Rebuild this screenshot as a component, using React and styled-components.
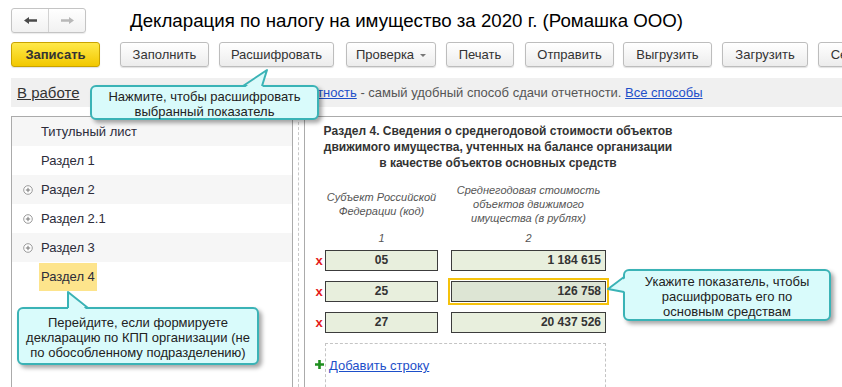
import styled, { createGlobalStyle } from "styled-components";

const GlobalStyle = createGlobalStyle`
  body {
    margin: 0;
    background: #fff;
    font-family: "Liberation Sans", Arial, sans-serif;
  }
`;

const actions = [
  { label: "Заполнить", width: 89, gap: 20 },
  { label: "Расшифровать", width: 115 },
  { label: "Проверка", width: 90, menu: true, gap: 12 },
  { label: "Печать", width: 68 },
  { label: "Отправить", width: 89, gap: 11 },
  { label: "Выгрузить", width: 89, gap: 9 },
  { label: "Загрузить", width: 86 },
  { label: "Сервис", width: 70 },
];

const sections = [
  { title: "Титульный лист" },
  { title: "Раздел 1" },
  { title: "Раздел 2", expandable: true },
  { title: "Раздел 2.1", expandable: true },
  { title: "Раздел 3", expandable: true },
  { title: "Раздел 4", selected: true },
];

const rows = [
  { code: "05", value: "1 184 615" },
  { code: "25", value: "126 758", active: true },
  { code: "27", value: "20 437 526" },
];

function ArrowIcon({ dir, color }) {
  const d = dir === "left"
    ? "M0 3.5 L5 0 L5 2.2 L13 2.2 L13 4.8 L5 4.8 L5 7 Z"
    : "M13 3.5 L8 0 L8 2.2 L0 2.2 L0 4.8 L8 4.8 L8 7 Z";
  return (
    <svg width="13" height="7" viewBox="0 0 13 7">
      <path d={d} fill={color} />
    </svg>
  );
}

function PlusCircle() {
  return (
    <svg width="10" height="10" viewBox="0 0 10 10">
      <circle cx="5" cy="5" r="4.3" fill="#fff" stroke="#9a9a9a" strokeWidth="1" />
      <path d="M2.8 5 H7.2 M5 2.8 V7.2" stroke="#777" strokeWidth="1" />
    </svg>
  );
}

function AddIcon() {
  return (
    <svg width="9" height="9" viewBox="0 0 9 9">
      <path d="M0 4.5 H9 M4.5 0 V9" stroke="#1f8f1f" strokeWidth="2.6" />
    </svg>
  );
}

function Callout({ left, top, width, height, tail, children }) {
  return (
    <Bubble style={{ left, top, width, height }}>
      <Tail>
        <polygon points={tail.fill} fill="#d9fbfb" />
        <polyline points={tail.line} fill="none" stroke="#3ab3b6" strokeWidth="2" strokeLinejoin="round" />
      </Tail>
      {children}
    </Bubble>
  );
}

function App() {
  return (
    <>
      <GlobalStyle />
      <Page>
        <Header>
          <NavGroup>
            <NavButton><ArrowIcon dir="left" color="#4a4a4a" /></NavButton>
            <NavButton><ArrowIcon dir="right" color="#b8b8b8" /></NavButton>
          </NavGroup>
          <Title>Декларация по налогу на имущество за 2020 г. (Ромашка ООО)</Title>
        </Header>

        <Toolbar>
          <Button $primary $w={89}>Записать</Button>
          {actions.map((a) => (
            <Button key={a.label} $w={a.width} $gap={a.gap}>
              {a.label}
              {a.menu && <Caret />}
            </Button>
          ))}
        </Toolbar>

        <InfoBar>
          <StatusLink>В работе</StatusLink>
          <InfoText>
            Отправка отчетов через <Link>1С-Отчетность</Link> - самый удобный способ сдачи отчетности.{" "}
            <Link>Все способы</Link>
          </InfoText>
        </InfoBar>

        <Main>
          <Sidebar>
            {sections.map((s, i) => (
              <NavRow key={s.title} $striped={i % 2 === 0 && !s.selected}>
                <IconSlot>{s.expandable && <PlusCircle />}</IconSlot>
                <RowLabel $selected={s.selected}>{s.title}</RowLabel>
              </NavRow>
            ))}
          </Sidebar>
          <Splitter />
          <Content>
            <Heading>
              Раздел 4. Сведения о среднегодовой стоимости объектов<br />
              движимого имущества, учтенных на балансе организации<br />
              в качестве объектов основных средств
            </Heading>

            <FormRow $mt={12} $center>
              <Mark />
              <HeadCell $w={113}>Субъект Российской<br />Федерации (код)</HeadCell>
              <HeadCell $w={155} $ml={13}>Среднегодовая стоимость<br />объектов движимого<br />имущества (в рублях)</HeadCell>
            </FormRow>

            <FormRow $mt={6}>
              <Mark />
              <HeadCell $w={113}>1</HeadCell>
              <HeadCell $w={155} $ml={13}>2</HeadCell>
            </FormRow>

            {rows.map((r, i) => (
              <FormRow key={r.code} $mt={i === 0 ? 5 : 10} $center>
                <Mark $color="#e41b1b">x</Mark>
                <Cell $w={113} $align="center">{r.code}</Cell>
                <Cell $w={155} $ml={13} $align="right" $active={r.active}>{r.value}</Cell>
              </FormRow>
            ))}

            <FormRow $mt={10}>
              <Mark $top={17}><AddIcon /></Mark>
              <AddArea>
                <Link>Добавить строку</Link>
              </AddArea>
            </FormRow>
          </Content>
        </Main>

        <Callout left={90} top={85} width={229} height={35}
          tail={{ fill: "153,4 177,-15 172,4", line: "153,1 177,-15 172,1" }}>
          Нажмите, чтобы расшифровать<br />выбранный показатель
        </Callout>

        <Callout left={17} top={307} width={242} height={58}
          tail={{ fill: "51,4 51,-15 71,4", line: "51,1 51,-15 71,1" }}>
          Перейдите, если формируете<br />декларацию по КПП организации (не<br />по обособленному подразделению)
        </Callout>

        <Callout left={623} top={269} width={208} height={52}
          tail={{ fill: "4,8 -15,20 4,23", line: "1,8 -15,20 1,23" }}>
          Укажите показатель, чтобы<br />расшифровать его по<br />основным средствам
        </Callout>
      </Page>
    </>
  );
}

const Page = styled.div`
  position: relative;
  width: 842px;
  height: 387px;
  overflow: hidden;
  padding-left: 11px;
  box-sizing: border-box;
  color: #333;
`;

const Header = styled.div`
  display: flex;
  align-items: center;
  height: 25px;
  margin-top: 8px;
`;

const NavGroup = styled.div`
  display: flex;
  height: 25px;
  border: 1px solid #c4c4c4;
  border-radius: 3px;
  box-sizing: border-box;
  background: linear-gradient(#ffffff, #f1f1f1);
  box-shadow: 0 1px 1px rgba(0, 0, 0, 0.08);
`;

const NavButton = styled.div`
  width: 36px;
  display: flex;
  align-items: center;
  justify-content: center;
  & + & {
    border-left: 1px solid #d2d2d2;
  }
`;

const Title = styled.h1`
  margin: 0 0 0 44px;
  font-size: 18.7px;
  font-weight: 400;
  color: #000;
  white-space: nowrap;
`;

const Toolbar = styled.div`
  display: flex;
  gap: 10px;
  margin-top: 9px;
  height: 25px;
`;

const Button = styled.div`
  flex-shrink: 0;
  display: flex;
  align-items: center;
  justify-content: center;
  gap: 6px;
  width: ${(p) => p.$w}px;
  height: 25px;
  box-sizing: border-box;
  margin-left: ${(p) => (p.$gap ? p.$gap - 10 : 0)}px;
  border: 1px solid ${(p) => (p.$primary ? "#c9a300" : "#bdbdbd")};
  border-radius: 3px;
  background: ${(p) =>
    p.$primary
      ? "linear-gradient(#ffe94a, #f2c800)"
      : "linear-gradient(#ffffff, #ececec)"};
  box-shadow: 0 1px 1px rgba(0, 0, 0, 0.12);
  font-size: 13px;
  font-weight: ${(p) => (p.$primary ? 700 : 400)};
  color: #333;
  white-space: nowrap;
`;

const Caret = styled.span`
  width: 0;
  height: 0;
  border-left: 3px solid transparent;
  border-right: 3px solid transparent;
  border-top: 3px solid #777;
  margin-top: 1px;
`;

const InfoBar = styled.div`
  display: flex;
  align-items: center;
  height: 29px;
  margin-top: 11px;
  padding-left: 6px;
  background: #f0f0f0;
  font-size: 13px;
  white-space: nowrap;
`;

const StatusLink = styled.span`
  font-size: 15px;
  color: #333;
  text-decoration: underline;
`;

const InfoText = styled.span`
  margin-left: 38px;
  color: #555;
`;

const Link = styled.span`
  color: #1d4fc9;
  text-decoration: underline;
`;

const Main = styled.div`
  display: flex;
  margin-top: 9px;
  height: 280px;
  border-top: 1px solid #ababab;
`;

const Sidebar = styled.div`
  width: 282px;
  box-sizing: border-box;
  border-left: 1px solid #ababab;
  border-right: 1px solid #ababab;
`;

const NavRow = styled.div`
  display: flex;
  align-items: center;
  height: 29px;
  padding-left: 11px;
  background: ${(p) => (p.$striped ? "#f6f6f6" : "#fff")};
  font-size: 13px;
  color: #2c2c3a;
`;

const IconSlot = styled.div`
  width: 18px;
  display: flex;
  align-items: center;
`;

const RowLabel = styled.span`
  line-height: 28px;
  padding: 0 2px;
  margin-left: -2px;
  background: ${(p) => (p.$selected ? "#fde48c" : "transparent")};
`;

const Splitter = styled.div`
  width: 5px;
  margin-right: 5px;
  border-right: 1px dashed #c8c8c8;
`;

const Content = styled.div`
  flex: 1;
  border-left: 1px solid #ababab;
  padding: 6px 0 0 8px;
`;

const Heading = styled.div`
  width: 370px;
  text-align: center;
  font-size: 12px;
  font-weight: 700;
  line-height: 16px;
  color: #333;
  white-space: nowrap;
`;

const FormRow = styled.div`
  display: flex;
  align-items: ${(p) => (p.$center ? "center" : "flex-start")};
  margin-top: ${(p) => p.$mt || 0}px;
`;

const Mark = styled.div`
  width: 12px;
  flex-shrink: 0;
  display: flex;
  justify-content: center;
  margin-top: ${(p) => p.$top || 0}px;
  font-size: 13px;
  font-weight: 700;
  line-height: 14px;
  color: ${(p) => p.$color || "transparent"};
`;

const HeadCell = styled.div`
  width: ${(p) => p.$w}px;
  margin-left: ${(p) => p.$ml || 0}px;
  text-align: center;
  font-size: 11px;
  font-style: italic;
  line-height: 14px;
  color: #555;
`;

const Cell = styled.div`
  width: ${(p) => p.$w}px;
  height: 21px;
  box-sizing: border-box;
  margin-left: ${(p) => p.$ml || 0}px;
  padding: 0 4px;
  border: 1px solid #3c3c3c;
  background: ${(p) => (p.$active ? "#dde5d4" : "#e8efdd")};
  outline: ${(p) => (p.$active ? "2px solid #f5c20c" : "none")};
  outline-offset: 1px;
  text-align: ${(p) => p.$align};
  font-size: 12px;
  font-weight: 700;
  line-height: 19px;
  color: #333;
`;

const AddArea = styled.div`
  width: 281px;
  height: 60px;
  box-sizing: border-box;
  padding: 14px 0 0 3px;
  border: 1px dashed #c4c4c4;
  font-size: 13px;
  line-height: 15px;
`;

const Bubble = styled.div`
  position: absolute;
  box-sizing: border-box;
  display: flex;
  flex-direction: column;
  justify-content: center;
  padding-top: 2px;
  border: 2px solid #3ab3b6;
  border-radius: 6px;
  background: #d9fbfb;
  box-shadow: 3px 3px 4px rgba(0, 0, 0, 0.35);
  text-align: center;
  font-size: 13px;
  line-height: 15px;
  color: #222;
  white-space: nowrap;
`;

const Tail = styled.svg`
  position: absolute;
  left: -2px;
  top: -2px;
  width: 1px;
  height: 1px;
  overflow: visible;
`;

export default App;
